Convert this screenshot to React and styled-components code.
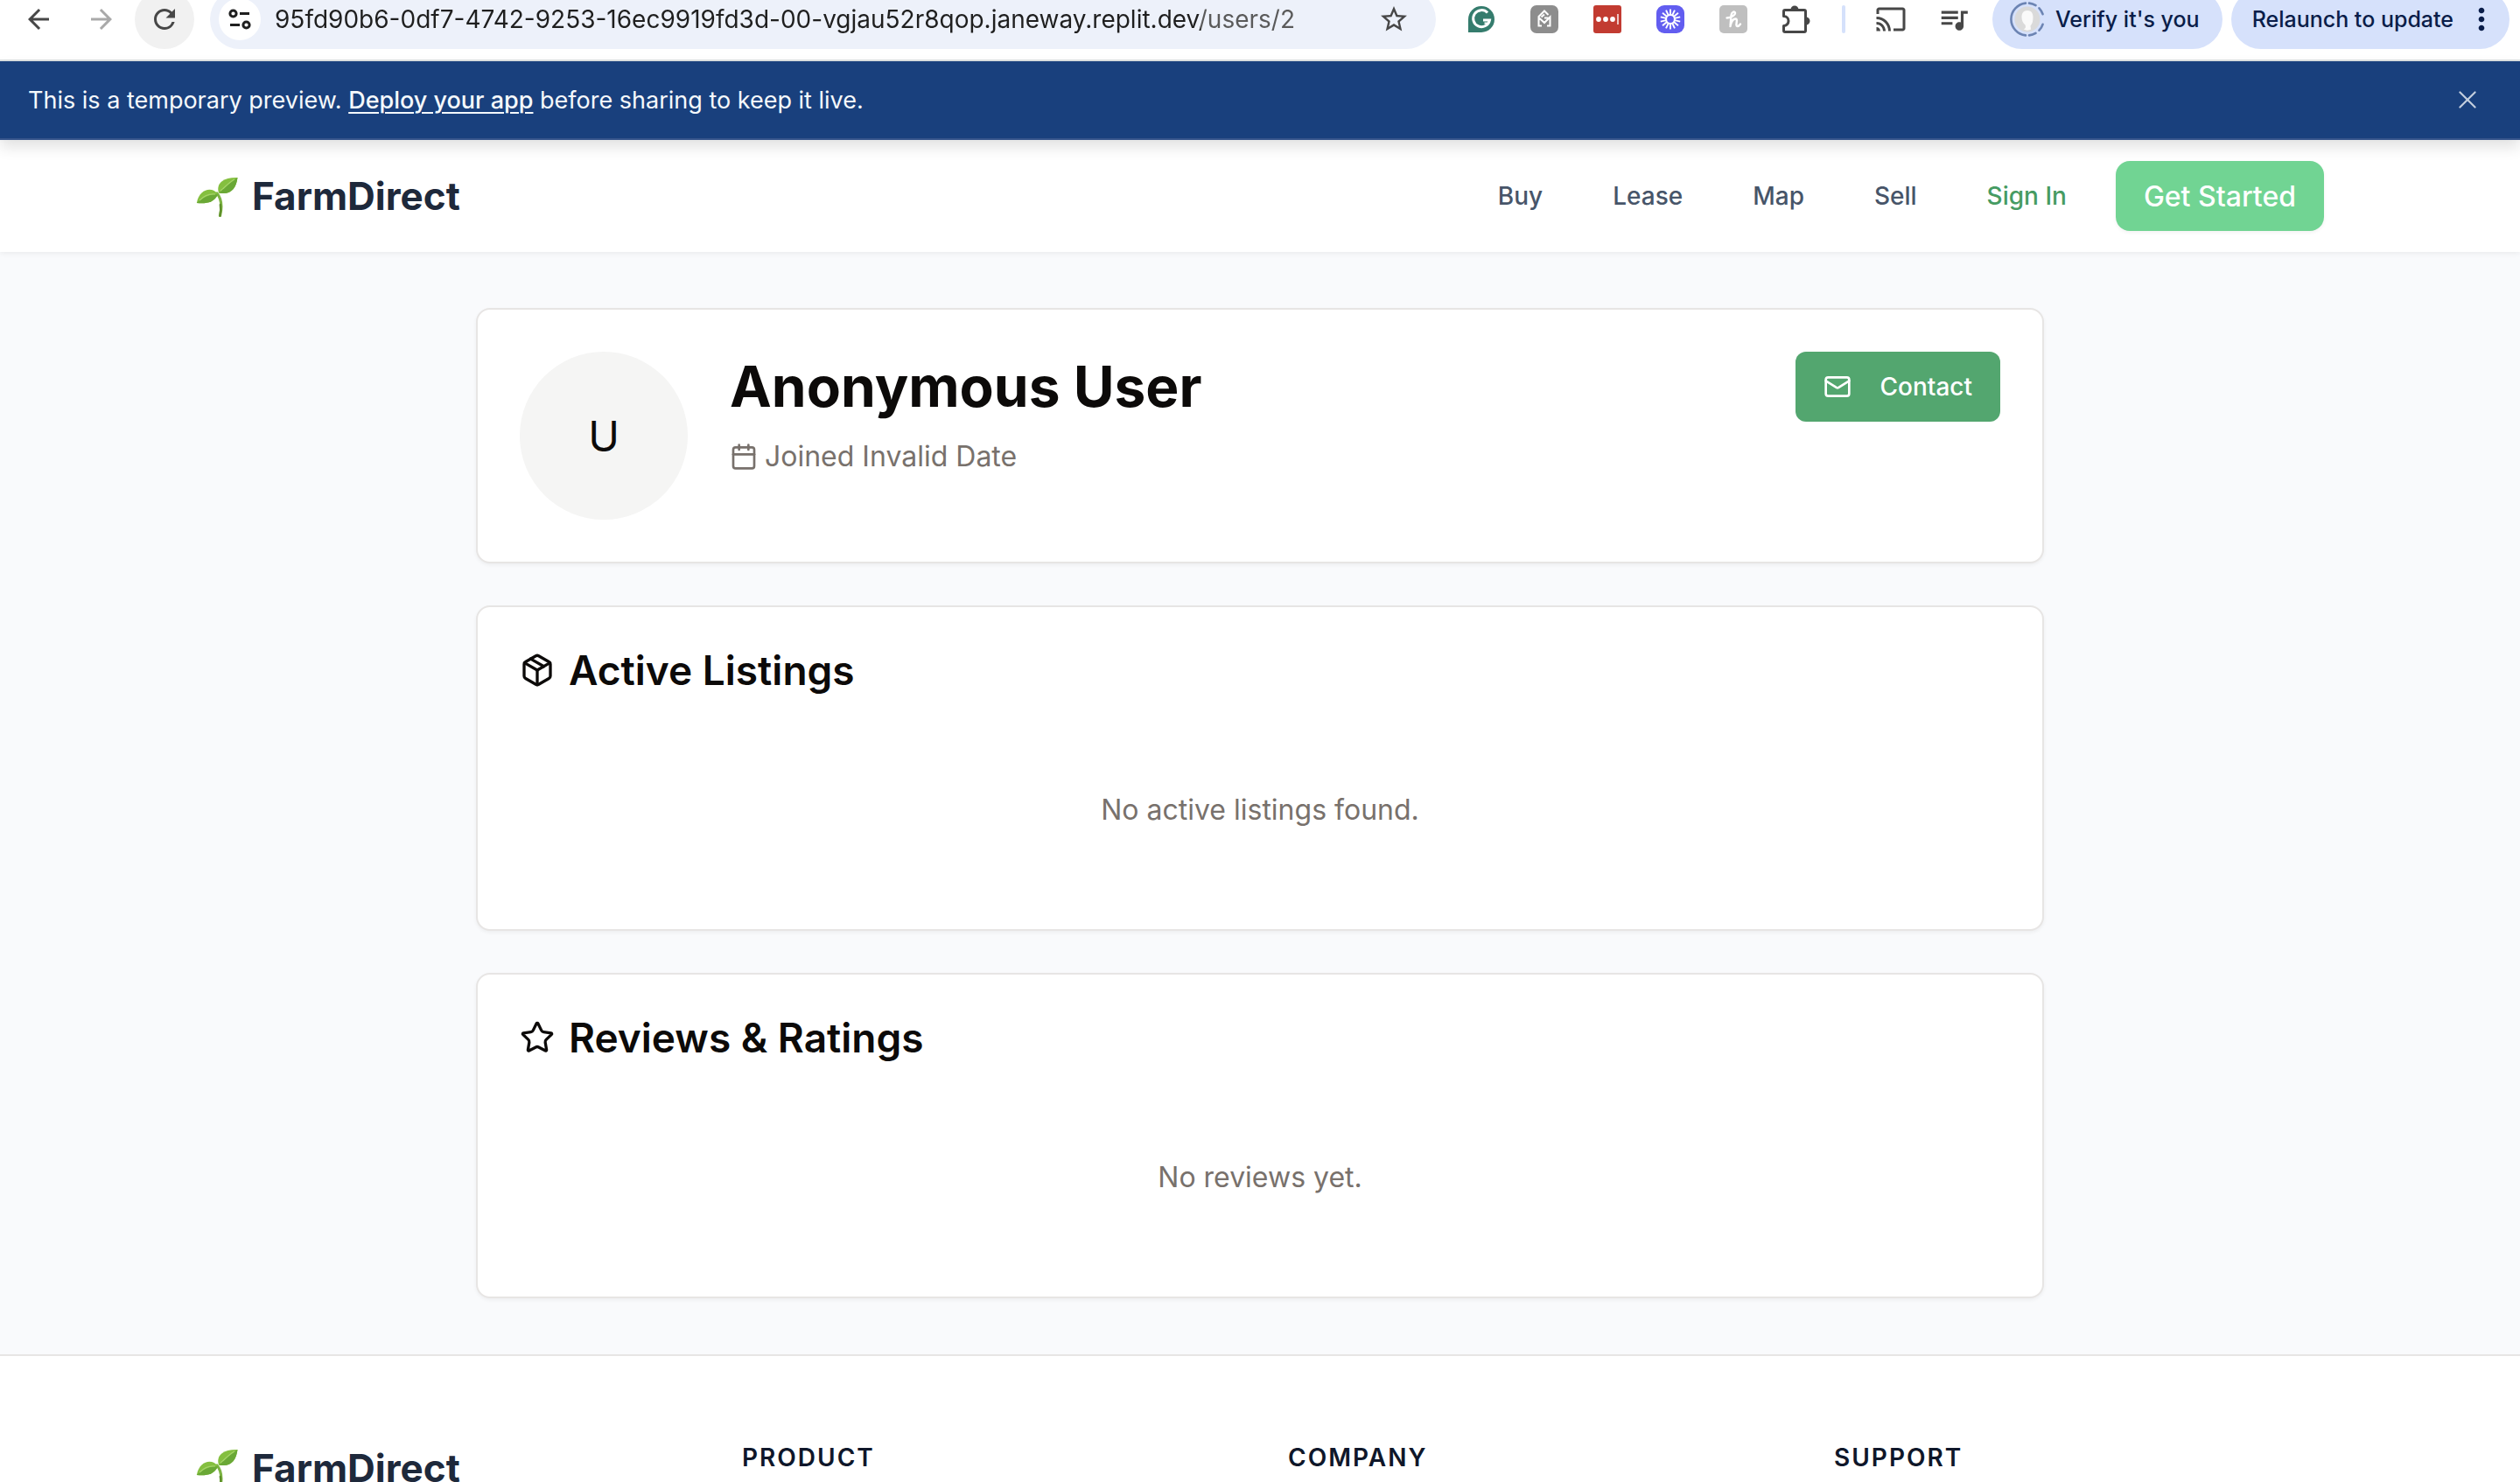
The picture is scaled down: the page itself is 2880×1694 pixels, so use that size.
import React from 'react';
import styled, { createGlobalStyle } from 'styled-components';
import { Calendar, Mail, Package, Star, X } from 'lucide-react';
import {
  MdArrowBack,
  MdArrowForward,
  MdCast,
  MdMoreVert,
  MdQueueMusic,
  MdRefresh,
  MdStarBorder,
} from 'react-icons/md';

const GlobalStyle = createGlobalStyle`
  *, *::before, *::after { box-sizing: border-box; }
  body {
    margin: 0;
    font-family: Inter, "Liberation Sans", sans-serif;
    color: #0c0a09;
    background: #ffffff;
    -webkit-font-smoothing: antialiased;
  }
  h1, h2, h3, p { margin: 0; }
  a { color: inherit; text-decoration: none; }
  button { font: inherit; color: inherit; border: 0; padding: 0; background: none; cursor: pointer; }
  svg { display: block; flex: none; }
`;

const Shell = styled.div`
  display: flex;
  flex-direction: column;
  height: 100vh;
  overflow: hidden;
`;

/* Browser chrome */

const Toolbar = styled.div`
  flex: none;
  height: 70px;
  overflow: hidden;
  border-bottom: 2px solid #dde1e1;
  background: #ffffff;
`;

const ToolbarRow = styled.div`
  display: flex;
  align-items: center;
  gap: 18px;
  height: 68px;
  margin-top: -12px;
  padding: 0 12px 0 10px;
`;

const IconGroup = styled.div`
  display: flex;
  gap: 4px;
`;

const RoundButton = styled.button`
  display: flex;
  align-items: center;
  justify-content: center;
  width: 68px;
  height: 68px;
  border-radius: 50%;
  color: ${(p) => (p.$faded ? '#a9a9a9' : '#474747')};
  background: ${(p) => (p.$filled ? '#f1f1f1' : 'transparent')};
`;

const AddressBar = styled.label`
  display: flex;
  flex: 1;
  align-items: center;
  height: 68px;
  padding: 0 14px 0 10px;
  border-radius: 34px;
  background: #edf1fa;
`;

const SiteInfo = styled.button`
  display: flex;
  align-items: center;
  justify-content: center;
  width: 48px;
  height: 48px;
  margin-right: 16px;
  border-radius: 50%;
  background: #ffffff;
`;

const AddressInput = styled.input`
  flex: 1;
  min-width: 0;
  height: 48px;
  padding: 0;
  border: 0;
  outline: 0;
  font: 400 28px/48px Inter, "Liberation Sans", sans-serif;
  color: #1f1f1f;
  background: linear-gradient(90deg, #1f1f1f 1058px, #5a5a5a 1058px);
  background-clip: text;
  -webkit-background-clip: text;
  -webkit-text-fill-color: transparent;
`;

const Divider = styled.span`
  width: 4px;
  height: 32px;
  border-radius: 2px;
  background: #d5e1fb;
`;

const PillGroup = styled.div`
  display: flex;
  gap: 10px;
  margin-left: -8px;
`;

const Pill = styled.button`
  display: flex;
  align-items: center;
  gap: 12px;
  height: 68px;
  padding: ${(p) => (p.$wide ? '0 12px 0 24px' : '0 26px 0 20px')};
  border-radius: 34px;
  font-size: 25px;
  font-weight: 500;
  color: #0a1d49;
  background: #d6e1fb;
  white-space: nowrap;
`;

/* Preview banner */

const Banner = styled.div`
  position: relative;
  z-index: 2;
  display: flex;
  flex: none;
  align-items: center;
  justify-content: space-between;
  height: 90px;
  padding: 0 50px 0 32px;
  border-bottom: 2px solid #36548b;
  font-size: 27px;
  color: #f5f9fc;
  background: #19407d;
  box-shadow: 0 8px 16px rgba(0, 0, 0, 0.12);
`;

const DeployLink = styled.a`
  font-weight: 500;
  text-decoration: underline;
  text-decoration-thickness: 2px;
  text-underline-offset: 4px;
`;

const CloseButton = styled.button`
  color: #c3cede;
`;

/* Site header */

const Header = styled.header`
  position: relative;
  z-index: 1;
  flex: none;
  background: #ffffff;
  box-shadow: 0 2px 6px rgba(0, 0, 0, 0.06);
`;

const Container = styled.div`
  max-width: 2560px;
  margin: 0 auto;
  padding: 0 64px;
`;

const HeaderRow = styled(Container)`
  display: flex;
  align-items: center;
  justify-content: space-between;
  height: 128px;
`;

const Brand = styled.a`
  display: flex;
  align-items: center;
  gap: 16px;
  height: 64px;
  font-size: 44px;
  font-weight: 700;
  line-height: 64px;
  color: #1e293b;
`;

const Nav = styled.nav`
  display: flex;
  align-items: center;
  gap: 80px;
  font-size: 28px;
  font-weight: 500;
  color: #475569;
`;

const Actions = styled.div`
  display: flex;
  align-items: center;
  gap: 56px;
`;

const SignIn = styled.a`
  color: #469b62;
`;

const Button = styled.button`
  display: flex;
  align-items: center;
  gap: 32px;
  height: 80px;
  padding: 0 32px;
  border-radius: ${(p) => (p.$soft ? '16px' : '12px')};
  font-size: ${(p) => (p.$soft ? '32px' : '28px')};
  font-weight: 500;
  color: #ffffff;
  background: ${(p) => (p.$soft ? '#71d493' : '#53a66f')};
  box-shadow: ${(p) => (p.$soft ? '0 2px 4px rgba(0, 0, 0, 0.05)' : 'none')};
`;

/* Profile page */

const Main = styled.main`
  flex: none;
  padding: 64px;
  background: #f9fafc;
`;

const Stack = styled.div`
  display: flex;
  flex-direction: column;
  gap: 48px;
  max-width: 1792px;
  margin: 0 auto;
`;

const Card = styled.section`
  padding: 48px;
  border: 2px solid #e7e5e4;
  border-radius: 16px;
  background: #ffffff;
  box-shadow: 0 2px 4px rgba(0, 0, 0, 0.05);
`;

const Profile = styled.div`
  display: flex;
  align-items: flex-start;
  gap: 48px;
`;

const Avatar = styled.div`
  display: flex;
  align-items: center;
  justify-content: center;
  width: 192px;
  height: 192px;
  border-radius: 50%;
  font-size: 48px;
  background: #f5f5f4;
`;

const ProfileBody = styled.div`
  flex: 1;
`;

const ProfileTop = styled.div`
  display: flex;
  align-items: center;
  justify-content: space-between;
`;

const Name = styled.h1`
  font-size: 64px;
  font-weight: 700;
  line-height: 72px;
`;

const Joined = styled.p`
  display: flex;
  align-items: center;
  gap: 8px;
  margin-top: 16px;
  font-size: 32px;
  line-height: 48px;
  color: #78716c;
`;

const CardTitle = styled.h2`
  display: flex;
  align-items: center;
  gap: 16px;
  font-size: 46px;
  font-weight: 600;
  line-height: 48px;
`;

const Empty = styled.p`
  padding: 112px 0 64px;
  font-size: 32px;
  line-height: 48px;
  text-align: center;
  color: #78716c;
`;

/* Footer */

const Footer = styled.footer`
  flex: 1 0 auto;
  border-top: 2px solid #e7e5e4;
  background: #ffffff;
`;

const FooterGrid = styled(Container)`
  display: grid;
  grid-template-columns: repeat(4, 1fr);
  gap: 64px;
  padding-top: 96px;
`;

const FooterHeading = styled.h3`
  font-size: 28px;
  font-weight: 600;
  line-height: 40px;
  letter-spacing: 2px;
  text-transform: uppercase;
  color: #0f172a;
`;

const Sprout = () => (
  <svg width="48" height="48" viewBox="0 0 48 48" fill="none" aria-hidden="true">
    <path d="M24 21C29 27 30 36 27.500 46.500" stroke="#7cb342" strokeWidth="3.200" strokeLinecap="round" />
    <path d="M27.800 34C28.600 38 28.400 42 27.500 46.500" stroke="#5f8f2c" strokeWidth="2.400" strokeLinecap="round" />
    <path d="M26 20.500C23 11 29 2.500 47.500 3C46 15 40 23.500 26 20.500Z" fill="#84bf3f" />
    <path d="M26 20.500C31 17 37 10 47.500 3C46 15 40 23.500 26 20.500Z" fill="#6aa836" />
    <path d="M28 18C33 14 37 9 44 5" stroke="#a5d46a" strokeWidth="1.200" />
    <path d="M25 22C19 13 4 15 .8 32C11 33 21 32 25 22Z" fill="#84bf3f" />
    <path d="M25 22C17 22 8 25 .8 32C11 33 21 32 25 22Z" fill="#6aa836" />
    <path d="M22 22C15 21 8 25 4 29" stroke="#a5d46a" strokeWidth="1.200" />
  </svg>
);

const TuneIcon = () => (
  <svg width="26" height="26" viewBox="0 0 26 26" fill="none" stroke="#1f1f1f" strokeWidth="3" aria-hidden="true">
    <circle cx="5.500" cy="6.500" r="3.600" />
    <path d="M13 6.500h11M2 19.500h11" />
    <circle cx="20.500" cy="19.500" r="3.600" />
  </svg>
);

const GrammarIcon = () => (
  <svg width="30" height="30" viewBox="0 0 30 30" fill="none" aria-hidden="true">
    <path d="M15 0a15 15 0 0 1 0 30H0V15A15 15 0 0 1 15 0Z" fill="#357c6d" />
    <path d="M22 7.500A9.500 9.500 0 1 0 24.500 16H17" stroke="#fff" strokeWidth="3" />
    <path d="M18.500 19.500H24" stroke="#fff" strokeWidth="2" />
  </svg>
);

const HouseIcon = () => (
  <svg width="32" height="32" viewBox="0 0 32 32" fill="none" aria-hidden="true">
    <rect width="32" height="32" rx="7" fill="#8d8d8d" />
    <path
      d="M13 23.500H9.500V13L16 6.500 20.500 11M9.500 14l6.500 6 6.500-6.500V23.500H19M16 14.500h4.500M12.500 13.500l3.500-3"
      stroke="#fff"
      strokeWidth="2"
    />
  </svg>
);

const PasswordIcon = () => (
  <svg width="32" height="32" viewBox="0 0 32 32" aria-hidden="true">
    <rect width="32" height="32" rx="3" fill="#c23b31" />
    <g fill="#fff">
      <circle cx="6" cy="16" r="2.900" />
      <circle cx="14" cy="16" r="2.900" />
      <circle cx="22" cy="16" r="2.900" />
      <path d="M27.300 10h1.400v12h-1.400z" />
    </g>
  </svg>
);

const BurstIcon = () => (
  <svg width="32" height="32" viewBox="0 0 32 32" aria-hidden="true">
    <rect width="32" height="32" rx="9" fill="#625df0" />
    <g stroke="#fff" strokeWidth="1.900">
      {Array.from({ length: 14 }, (_, i) => (
        <path key={i} d="M16 4.500V11" transform={`rotate(${(i * 360) / 14} 16 16)`} />
      ))}
      <circle cx="16" cy="16" r="5" fill="none" strokeWidth="2.200" />
    </g>
  </svg>
);

const CouponIcon = () => (
  <svg width="32" height="32" viewBox="0 0 32 32" fill="none" aria-hidden="true">
    <rect width="32" height="32" rx="5" fill="#bfbfbf" />
    <path
      d="M8.500 14.500C14 14 18.500 11 18 8.500c-.5-2-4-1-4.500 3L12.500 24c1-5 3.500-8.500 6-8.500 3.500 0-1 8.500 2 8.500 1.500 0 2.500-1 3.500-2.500"
      stroke="#fff"
      strokeWidth="2.400"
      strokeLinecap="round"
      strokeLinejoin="round"
    />
  </svg>
);

const PuzzleIcon = () => (
  <svg width="34" height="36" viewBox="0 0 34 36" fill="none" aria-hidden="true">
    <path
      d="M4 7.500H26a1.500 1.500 0 0 1 1.500 1.500V31A1.500 1.500 0 0 1 26 32.500H4A1.500 1.500 0 0 1 2.500 31V25.500a5 5 0 0 0 0-11V9A1.500 1.500 0 0 1 4 7.500Z"
      stroke="#474747"
      strokeWidth="3"
      strokeLinejoin="round"
    />
    <path d="M10.500 7a4.500 4.500 0 0 1 9 0ZM28 15.500a4.500 4.500 0 0 1 0 9Z" fill="#474747" />
  </svg>
);

const GuestIcon = () => (
  <svg width="40" height="40" viewBox="0 0 40 40" fill="none" aria-hidden="true">
    <g stroke="#6c84b3" strokeWidth="2.600" strokeLinecap="round">
      <path d="M18 1.600A18.500 18.500 0 0 0 18 38.400" />
      <path d="M22 1.600A18.500 18.500 0 0 1 38.400 18" strokeDasharray="8 5" />
      <path d="M22 38.400A18.500 18.500 0 0 0 38.400 22" strokeDasharray="8 5" />
    </g>
    <circle cx="20" cy="20" r="14.500" fill="#dadada" />
    <path
      d="M20 10c4.500 0 6.500 3 6.500 7.500 0 5-1 8-3 10l.5 4c-2 1.500-6 1.500-8 0 2-1 2.500-3 1.500-5-2.500-2-4-5-4-9 0-4.500 2-7.500 6.500-7.500Z"
      fill="#fafafa"
    />
  </svg>
);

const extensions = [
  { label: 'Writing assistant', icon: <GrammarIcon /> },
  { label: 'Home extension', icon: <HouseIcon /> },
  { label: 'Password manager', icon: <PasswordIcon /> },
  { label: 'Screen recorder', icon: <BurstIcon /> },
  { label: 'Coupons', icon: <CouponIcon /> },
  { label: 'Extensions', icon: <PuzzleIcon /> },
];

const links = ['Buy', 'Lease', 'Map', 'Sell'];
const footerSections = ['Product', 'Company', 'Support'];

function BrowserToolbar() {
  return (
    <Toolbar>
      <ToolbarRow>
        <IconGroup>
          <RoundButton aria-label="Back"><MdArrowBack size={36} /></RoundButton>
          <RoundButton aria-label="Forward" $faded><MdArrowForward size={36} /></RoundButton>
          <RoundButton aria-label="Reload" $filled><MdRefresh size={36} /></RoundButton>
        </IconGroup>
        <AddressBar>
          <SiteInfo aria-label="Site information"><TuneIcon /></SiteInfo>
          <AddressInput
            type="text"
            aria-label="Address"
            defaultValue="95fd90b6-0df7-4742-9253-16ec9919fd3d-00-vgjau52r8qop.janeway.replit.dev/users/2"
          />
          <RoundButton aria-label="Bookmark this page"><MdStarBorder size={36} /></RoundButton>
        </AddressBar>
        <IconGroup>
          {extensions.map((e) => (
            <RoundButton key={e.label} aria-label={e.label}>{e.icon}</RoundButton>
          ))}
        </IconGroup>
        <Divider />
        <IconGroup>
          <RoundButton aria-label="Cast"><MdCast size={36} /></RoundButton>
          <RoundButton aria-label="Media controls"><MdQueueMusic size={38} /></RoundButton>
        </IconGroup>
        <PillGroup>
          <Pill><GuestIcon />Verify it's you</Pill>
          <Pill $wide>Relaunch to update<MdMoreVert size={40} /></Pill>
        </PillGroup>
      </ToolbarRow>
    </Toolbar>
  );
}

function Logo() {
  return (
    <Brand href="#home"><Sprout /><span>FarmDirect</span></Brand>
  );
}

function Section({ icon, title, empty }) {
  return (
    <Card>
      <CardTitle>{icon}{title}</CardTitle>
      <Empty>{empty}</Empty>
    </Card>
  );
}

export default function App() {
  return (
    <>
      <GlobalStyle />
      <Shell>
        <BrowserToolbar />
        <Banner>
          <p>
            This is a temporary preview. <DeployLink href="#deploy">Deploy your app</DeployLink> before sharing to keep it live.
          </p>
          <CloseButton aria-label="Dismiss"><X size={20} viewBox="5 5 14 14" strokeWidth={1.5} /></CloseButton>
        </Banner>
        <Header>
          <HeaderRow>
            <Logo />
            <Actions>
              <Nav>
                {links.map((l) => <a key={l} href={`#${l.toLowerCase()}`}>{l}</a>)}
                <SignIn href="#sign-in">Sign In</SignIn>
              </Nav>
              <Button $soft>Get Started</Button>
            </Actions>
          </HeaderRow>
        </Header>
        <Main>
          <Stack>
            <Card>
              <Profile>
                <Avatar>U</Avatar>
                <ProfileBody>
                  <ProfileTop>
                    <Name>Anonymous User</Name>
                    <Button><Mail size={32} />Contact</Button>
                  </ProfileTop>
                  <Joined><Calendar size={32} />Joined Invalid Date</Joined>
                </ProfileBody>
              </Profile>
            </Card>
            <Section icon={<Package size={40} />} title="Active Listings" empty="No active listings found." />
            <Section icon={<Star size={40} />} title="Reviews & Ratings" empty="No reviews yet." />
          </Stack>
        </Main>
        <Footer>
          <FooterGrid>
            <Logo />
            {footerSections.map((s) => <FooterHeading key={s}>{s}</FooterHeading>)}
          </FooterGrid>
        </Footer>
      </Shell>
    </>
  );
}
